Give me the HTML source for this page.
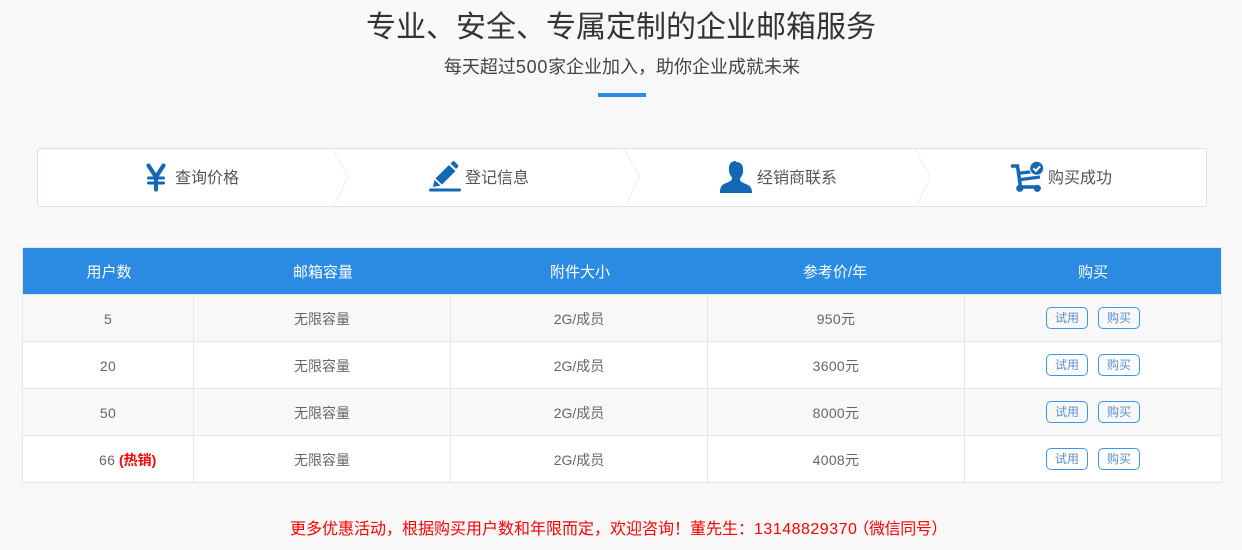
<!DOCTYPE html>
<html lang="zh-CN"><head><meta charset="utf-8"><title>企业邮箱服务</title>
<style>
html,body{margin:0;padding:0}
body{width:1242px;height:550px;overflow:hidden;background:#f8f8f9;position:relative;font-family:"Liberation Sans","Noto Sans CJK SC",sans-serif;color:#666}
.a{position:absolute;white-space:nowrap}
.c{text-align:center}
.n{letter-spacing:.3px}
.cell{position:absolute;text-align:center;font-size:14px;line-height:47px;color:#666;height:47px}
.h{color:#fff;line-height:47px;font-size:15px}
.btn{position:absolute;width:40px;height:20px;border:1px solid #3f97e6;border-radius:5px;background:transparent;font-size:12px;line-height:21px;text-align:center;color:#5a8fd0}
.row{position:absolute;left:22px;width:1200px;height:47px}
.v{position:absolute;width:1px;background:#e3e6f3}
.hl{position:absolute;left:22px;width:1200px;height:1px;background:#e3e6f3}
.st{position:absolute;top:168px;font-size:16px;line-height:22px;color:#555;white-space:nowrap}
</style></head><body>
<div class="a c" style="left:0;width:1242px;top:6px;font-size:30px;line-height:44px;color:#333">专业、安全、专属定制的企业邮箱服务</div>
<div class="a c" style="left:1px;width:1242px;top:54px;font-size:18px;line-height:27px;color:#444">每天超过<span style="letter-spacing:.7px">500</span>家企业加入，助你企业成就未来</div>
<div class="a" style="left:598px;top:93px;width:48px;height:4px;background:#2b8ae2"></div>

<div class="a" style="left:37px;top:148px;width:1168px;height:57px;background:#fff;border:1px solid #dbe3ea;border-radius:3px"></div>
<svg class="a" style="left:0;top:0" width="1242" height="250" fill="none" stroke="#ebeff2" stroke-width="1">
<path d="M332.500 149L348 177L334.500 205M331 205L329.500 207"/>
<path d="M624 149L639.500 177L626 205M622.500 205L621 207"/>
<path d="M915 149L930.500 177L917 205M913.500 205L912 207"/>
</svg>
<svg class="a" style="left:144px;top:162px" width="24" height="32" viewBox="0 0 24 32" fill="none" stroke="#1368b4" stroke-linecap="round"><path d="M4.500 3.500L12 15L19.500 3.500" stroke-width="4.200"/><path d="M12 15V27.500" stroke-width="4.200"/><path d="M4.500 16h15M4.500 21h15" stroke-width="3"/></svg>
<div class="st" style="left:175px">查询价格</div>
<svg class="a" style="left:428px;top:160px" width="36" height="34" viewBox="0 0 36 34" fill="#1368b4"><path d="M7.500 18.500L21 5l6.500 6L14 24.500z"/><path d="M6.500 20l6 5.500-7.500 1.500z"/><path d="M22.500 3.500l2-2q1-.8 2 0l3.500 3.500q.8 1 0 2l-2 2z"/><rect x="1" y="28.500" width="32" height="3" rx="1.500"/></svg>
<div class="st" style="left:465px">登记信息</div>
<svg class="a" style="left:719px;top:160px" width="34" height="34" viewBox="0 0 34 34" fill="#1368b4"><path d="M17 2c4.800 0 7 3 7 7 0 1 .2 2 0 3-.3 3-1.800 5-3 6.500 0 2 .5 3 2.500 4l5 2.200c3 1.300 4.500 4 4.500 7.800V33H1v-1.500c0-3.800 1.500-6.500 4.500-7.800l5-2.200c2-1 2.500-2 2.500-4-1.200-1.500-2.700-3.500-3-6.500-.2-1 0-2 0-3 0-4 2.200-7 7-7z"/></svg>
<div class="st" style="left:757px">经销商联系</div>
<svg class="a" style="left:1010px;top:160px" width="36" height="34" viewBox="0 0 36 34"><path d="M2.500 6H7.500L10.500 27H27" fill="none" stroke="#1368b4" stroke-width="3.500" stroke-linecap="round"/><path d="M9 13.300L21 11.700M11 19.500L30 17" fill="none" stroke="#1368b4" stroke-width="3.300"/><circle cx="9.800" cy="28.300" r="3.600" fill="#1368b4"/><circle cx="27.300" cy="28.300" r="3.600" fill="#1368b4"/><circle cx="26.700" cy="8.300" r="7" fill="#1368b4" stroke="#fff" stroke-width="1"/><path d="M23.300 8.300l2.500 2.500 4.300-4.500" fill="none" stroke="#fff" stroke-width="2"/></svg>
<div class="st" style="left:1048px">购买成功</div>

<div class="a" style="left:23px;top:248px;width:1198px;height:46px;background:#2b8ae2"></div>
<div class="row" style="top:295px;background:#f8f8f9"></div>
<div class="row" style="top:342px;background:#fff"></div>
<div class="row" style="top:389px;background:#f8f8f9"></div>
<div class="row" style="top:436px;background:#fff"></div>
<div class="hl" style="top:247px"></div><div class="hl" style="top:294px"></div>
<div class="hl" style="top:341px"></div><div class="hl" style="top:388px"></div><div class="hl" style="top:435px"></div><div class="hl" style="top:482px"></div>
<div class="v" style="left:22px;top:247px;height:236px"></div>
<div class="v" style="left:1221px;top:247px;height:236px"></div>
<div class="v" style="left:193px;top:295px;height:188px"></div>
<div class="v" style="left:450px;top:295px;height:188px"></div>
<div class="v" style="left:707px;top:295px;height:188px"></div>
<div class="v" style="left:964px;top:295px;height:188px"></div>

<div class="cell h" style="left:24px;width:170px;top:249px">用户数</div>
<div class="cell h" style="left:195px;width:256px;top:249px">邮箱容量</div>
<div class="cell h" style="left:452px;width:256px;top:249px">附件大小</div>
<div class="cell h" style="left:707px;width:256px;top:249px">参考价/年</div>
<div class="cell h" style="left:965px;width:256px;top:249px">购买</div>

<div class="cell n" style="left:23px;width:170px;top:296px">5</div>
<div class="cell" style="left:194px;width:256px;top:296px">无限容量</div>
<div class="cell" style="left:451px;width:256px;top:296px">2G/成员</div>
<div class="cell n" style="left:708px;width:256px;top:296px">950元</div>
<div class="btn" style="left:1046px;top:307px">试用</div><div class="btn" style="left:1098px;top:307px">购买</div>

<div class="cell n" style="left:23px;width:170px;top:343px">20</div>
<div class="cell" style="left:194px;width:256px;top:343px">无限容量</div>
<div class="cell" style="left:451px;width:256px;top:343px">2G/成员</div>
<div class="cell n" style="left:708px;width:256px;top:343px">3600元</div>
<div class="btn" style="left:1046px;top:354px">试用</div><div class="btn" style="left:1098px;top:354px">购买</div>

<div class="cell n" style="left:23px;width:170px;top:390px">50</div>
<div class="cell" style="left:194px;width:256px;top:390px">无限容量</div>
<div class="cell" style="left:451px;width:256px;top:390px">2G/成员</div>
<div class="cell n" style="left:708px;width:256px;top:390px">8000元</div>
<div class="btn" style="left:1046px;top:401px">试用</div><div class="btn" style="left:1098px;top:401px">购买</div>

<div class="a" style="left:99px;top:437px;font-size:14px;line-height:47px;color:#666;letter-spacing:.3px">66</div>
<div class="a" style="left:119px;top:437px;font-size:14px;line-height:47px;color:#f00;font-weight:bold">(热销)</div>
<div class="cell" style="left:194px;width:256px;top:437px">无限容量</div>
<div class="cell" style="left:451px;width:256px;top:437px">2G/成员</div>
<div class="cell n" style="left:708px;width:256px;top:437px">4008元</div>
<div class="btn" style="left:1046px;top:448px">试用</div><div class="btn" style="left:1098px;top:448px">购买</div>

<div class="a" style="left:290px;top:518px;font-size:16px;line-height:24px;color:#f00">更多优惠活动，根据购买用户数和年限而定，欢迎咨询！董先生：<span style="letter-spacing:.5px">13148829370</span><span style="margin-left:-4px;letter-spacing:-.4px">（微信同号）</span></div>
</body></html>
